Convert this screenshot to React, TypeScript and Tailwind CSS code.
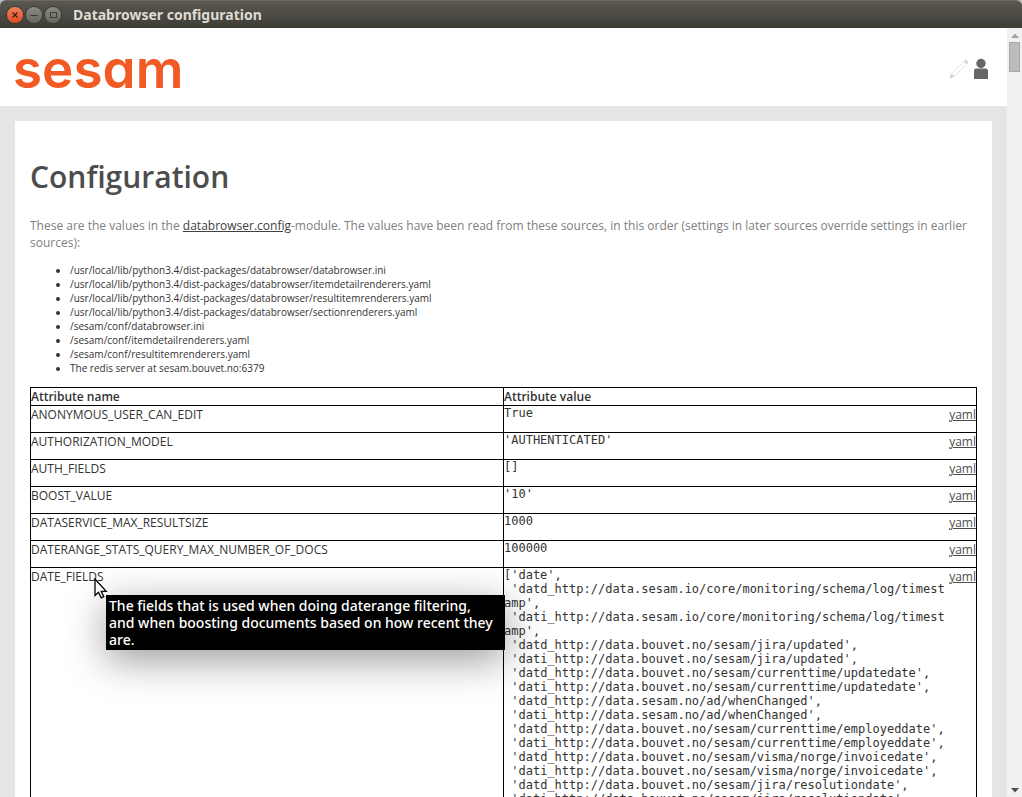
import React from "react";

const sources = [
  "/usr/local/lib/python3.4/dist-packages/databrowser/databrowser.ini",
  "/usr/local/lib/python3.4/dist-packages/databrowser/itemdetailrenderers.yaml",
  "/usr/local/lib/python3.4/dist-packages/databrowser/resultitemrenderers.yaml",
  "/usr/local/lib/python3.4/dist-packages/databrowser/sectionrenderers.yaml",
  "/sesam/conf/databrowser.ini",
  "/sesam/conf/itemdetailrenderers.yaml",
  "/sesam/conf/resultitemrenderers.yaml",
  "The redis server at sesam.bouvet.no:6379",
];

const dateFields = `['date',
 'datd_http://data.sesam.io/core/monitoring/schema/log/timestamp',
 'dati_http://data.sesam.io/core/monitoring/schema/log/timestamp',
 'datd_http://data.bouvet.no/sesam/jira/updated',
 'dati_http://data.bouvet.no/sesam/jira/updated',
 'datd_http://data.bouvet.no/sesam/currenttime/updatedate',
 'dati_http://data.bouvet.no/sesam/currenttime/updatedate',
 'datd_http://data.sesam.no/ad/whenChanged',
 'dati_http://data.sesam.no/ad/whenChanged',
 'datd_http://data.bouvet.no/sesam/currenttime/employeddate',
 'dati_http://data.bouvet.no/sesam/currenttime/employeddate',
 'datd_http://data.bouvet.no/sesam/visma/norge/invoicedate',
 'dati_http://data.bouvet.no/sesam/visma/norge/invoicedate',
 'datd_http://data.bouvet.no/sesam/jira/resolutiondate',
 'dati_http://data.bouvet.no/sesam/jira/resolutiondate',`;

type Attribute = { name: string; value: string; help?: string };

const attributes: Attribute[] = [
  { name: "ANONYMOUS_USER_CAN_EDIT", value: "True" },
  { name: "AUTHORIZATION_MODEL", value: "'AUTHENTICATED'" },
  { name: "AUTH_FIELDS", value: "[]" },
  { name: "BOOST_VALUE", value: "'10'" },
  { name: "DATASERVICE_MAX_RESULTSIZE", value: "1000" },
  { name: "DATERANGE_STATS_QUERY_MAX_NUMBER_OF_DOCS", value: "100000" },
  {
    name: "DATE_FIELDS",
    value: dateFields,
    help: "The fields that is used when doing daterange filtering,\nand when boosting documents based on how recent they\nare.",
  },
];

function TitleBar() {
  return (
    <div className="bg-[#b9bdc4]">
      <div className="flex h-7 items-center gap-[3px] rounded-t-md border-t border-[#6b6a62] bg-linear-to-b from-[#5a584f] to-[#3d3c37] pl-[7px]">
        <button aria-label="Close" className="flex size-4 items-center justify-center rounded-full bg-linear-to-b from-[#f4815c] to-[#df4b1c] ring-1 ring-[#3b3a35]">
          <svg viewBox="0 0 16 16" className="size-4 shrink-0" stroke="#3c2018" strokeWidth="1.3" fill="none">
            <path d="M5.500 5.500l5 5M10.500 5.500l-5 5" />
          </svg>
        </button>
        <button aria-label="Minimize" className="flex size-4 items-center justify-center rounded-full bg-linear-to-b from-[#8b8a83] to-[#67665f] ring-1 ring-[#3b3a35]">
          <svg viewBox="0 0 16 16" className="size-4 shrink-0" stroke="#3c3b36" fill="none">
            <path d="M4.500 8.500h7" />
          </svg>
        </button>
        <button aria-label="Maximize" className="flex size-4 items-center justify-center rounded-full bg-linear-to-b from-[#8b8a83] to-[#67665f] ring-1 ring-[#3b3a35]">
          <svg viewBox="0 0 16 16" className="size-4 shrink-0" stroke="#3c3b36" fill="none">
            <rect x="5.500" y="5.500" width="6" height="5" />
          </svg>
        </button>
        <span className="pl-[9px] font-['Noto_Sans',sans-serif] text-sm font-bold text-[#dfdbd2]">Databrowser configuration</span>
      </div>
    </div>
  );
}

function Header() {
  return (
    <header className="flex h-[78px] shrink-0 items-center justify-between bg-white pr-[18px] pl-[13px]">
      <a href="#home" className="pt-1 font-[Inter,sans-serif] text-[53px] leading-none font-semibold text-[#f15a24] [font-feature-settings:'cv11']">
        sesam
      </a>
      <div className="flex items-center gap-[3px] pt-1">
        <button aria-label="Edit">
          <svg viewBox="0 0 22 22" className="size-[22px]" fill="none" stroke="#d4d4d4">
            <path d="M3.500 16L16 3.500M6 18.500L18.500 6" strokeDasharray="1.500 0.700" />
            <path d="M2 20l1.500-4L6 18.500z" fill="#dedede" />
            <path d="M16 3.500L18 2l2 2-1.500 2z" fill="#dedede" />
          </svg>
        </button>
        <button aria-label="User">
          <svg viewBox="0 0 16 22" className="h-[22px] w-4" fill="#666">
            <circle cx="8" cy="5.500" r="4.700" />
            <path d="M1 21v-8q0-2.500 2.500-2.500h9q2.500 0 2.500 2.500v8z" />
          </svg>
        </button>
      </div>
    </header>
  );
}

function Pointer() {
  return (
    <svg viewBox="0 0 14 21" className="absolute top-2.5 left-[63px] z-20 h-[21px] w-3.5" fill="#fff" stroke="#000" strokeWidth="1.3">
      <path d="M1 1v16.500l3.500-3.200 2.700 5.600 2.600-1.200-2.600-5.400h5z" />
    </svg>
  );
}

function ScrollBar() {
  return (
    <div className="flex w-[15px] shrink-0 flex-col items-center justify-between bg-[#f1f1f1] pt-[5px] pb-1">
      <div className="flex flex-col items-center gap-1">
        <svg viewBox="0 0 8 5" className="h-[5px] w-2" fill="#a3a3a3"><path d="M0 5l4-4.500L8 5z" /></svg>
        <div className="h-[30px] w-[11px] border border-[#a8a8a8] bg-[#bcbcbc]" />
      </div>
      <svg viewBox="0 0 8 5" className="h-[5px] w-2" fill="#505050"><path d="M0 0l4 4.500L8 0z" /></svg>
    </div>
  );
}

export default function App() {
  return (
    <div className="flex h-screen flex-col overflow-hidden font-['Open_Sans',sans-serif] text-xs leading-[17px] text-[#333]">
      <TitleBar />
      <div className="flex min-h-0 flex-1">
        <div className="flex min-w-0 flex-1 flex-col overflow-hidden bg-[#e5e5e5]">
          <Header />
          <main className="m-[15px] bg-white px-[15px] pt-9 pb-4">
            <h1 className="text-[30px] leading-10 font-semibold text-[#4d4d4d]">Configuration</h1>
            <p className="pt-5 text-[#808080]">
              These are the values in the{" "}
              <a href="#databrowser-config" className="text-[#404040] underline">databrowser.config</a>
              -module. The values have been read from these sources, in this order (settings in later sources override settings in earlier sources):
            </p>
            <ul className="list-disc py-3 pl-10 text-[10px] leading-[14px]">
              {sources.map((source) => (
                <li key={source}>{source}</li>
              ))}
            </ul>
            <table className="w-full table-fixed border-collapse border border-black">
              <thead>
                <tr className="text-left">
                  <th className="border border-black p-0 font-semibold">Attribute name</th>
                  <th className="border border-black p-0 font-semibold">Attribute value</th>
                </tr>
              </thead>
              <tbody>
                {attributes.map(({ name, value, help }) => (
                  <tr key={name} className="align-top">
                    <td className="border border-black p-0">
                      <div className="relative">
                        {name}
                        {help && (
                          <>
                            <Pointer />
                            <div role="tooltip" className="absolute top-[27px] left-[75px] z-10 w-[399px] bg-black px-[3px] py-0.5 font-['Noto_Sans',sans-serif] text-sm leading-[17px] font-medium whitespace-pre-line text-white shadow-[0_10px_40px_rgba(0,0,0,0.4)]">
                              {help}
                            </div>
                          </>
                        )}
                      </div>
                    </td>
                    <td className="border border-black p-0">
                      <div className="flex items-start">
                        <pre className="mb-3 min-w-0 flex-1 font-['DejaVu_Sans_Mono',monospace] leading-[14px] break-all whitespace-pre-wrap">{value}</pre>
                        <a href={`#${name}`} className="text-[#4d4d4d] underline">yaml</a>
                      </div>
                    </td>
                  </tr>
                ))}
              </tbody>
            </table>
          </main>
        </div>
        <ScrollBar />
      </div>
    </div>
  );
}
